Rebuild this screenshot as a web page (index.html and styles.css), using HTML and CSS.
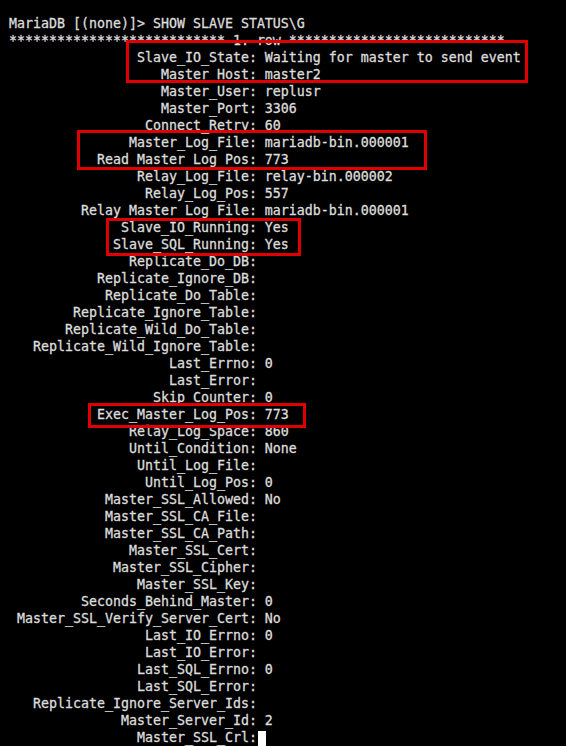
FILE: index.html
```html
<!DOCTYPE html>
<html>
<head>
<meta charset="utf-8">
<link rel="stylesheet" href="styles.css">
</head>
<body>
<div class="term">
<pre class="out">MariaDB [(none)]&gt; SHOW SLAVE STATUS\G
*************************** 1. row ***************************
                Slave_IO_State: Waiting for master to send event
                   Master_Host: master2
                   Master_User: replusr
                   Master_Port: 3306
                 Connect_Retry: 60
               Master_Log_File: mariadb-bin.000001
           Read_Master_Log_Pos: 773
                Relay_Log_File: relay-bin.000002
                 Relay_Log_Pos: 557
         Relay_Master_Log_File: mariadb-bin.000001
              Slave_IO_Running: Yes
             Slave_SQL_Running: Yes
               Replicate_Do_DB: 
           Replicate_Ignore_DB: 
            Replicate_Do_Table: 
        Replicate_Ignore_Table: 
       Replicate_Wild_Do_Table: 
   Replicate_Wild_Ignore_Table: 
                    Last_Errno: 0
                    Last_Error: 
                  Skip_Counter: 0
           Exec_Master_Log_Pos: 773
               Relay_Log_Space: 860
               Until_Condition: None
                Until_Log_File: 
                 Until_Log_Pos: 0
            Master_SSL_Allowed: No
            Master_SSL_CA_File: 
            Master_SSL_CA_Path: 
               Master_SSL_Cert: 
             Master_SSL_Cipher: 
                Master_SSL_Key: 
         Seconds_Behind_Master: 0
 Master_SSL_Verify_Server_Cert: No
                 Last_IO_Errno: 0
                 Last_IO_Error: 
                Last_SQL_Errno: 0
                Last_SQL_Error: 
   Replicate_Ignore_Server_Ids: 
              Master_Server_Id: 2
                Master_SSL_Crl:<span class="cursor"></span></pre>
<div class="mark mark-state"></div>
<div class="mark mark-log"></div>
<div class="mark mark-running"></div>
<div class="mark mark-exec"></div>
</div>
</body>
</html>
```

FILE: styles.css
```css
html, body {
  margin: 0;
  padding: 0;
  background: #000;
  height: 746px;
  overflow: hidden;
}

.term {
  position: relative;
  width: 566px;
  height: 746px;
  background: #000;
}

.out {
  margin: 0;
  padding: 15px 0 0 9px;
  font-family: "DejaVu Sans Mono", "Liberation Mono", monospace;
  font-size: 13.29px;
  line-height: 17px;
  color: #dcdcdc;
  -webkit-text-stroke: 0.3px #dcdcdc;
  white-space: pre;
}

.cursor {
  display: inline-block;
  width: 8px;
  height: 16px;
  background: #fff;
  vertical-align: -5px;
  margin-left: 1px;
}

.mark {
  position: absolute;
  border: 3px solid #e00000;
  box-sizing: border-box;
}

.mark-state {
  left: 126px;
  top: 40px;
  width: 402px;
  height: 43px;
}

.mark-log {
  left: 77px;
  top: 130px;
  width: 350px;
  height: 40px;
}

.mark-running {
  left: 106px;
  top: 218px;
  width: 195px;
  height: 38px;
}

.mark-exec {
  left: 88px;
  top: 403px;
  width: 218px;
  height: 25px;
}
```
